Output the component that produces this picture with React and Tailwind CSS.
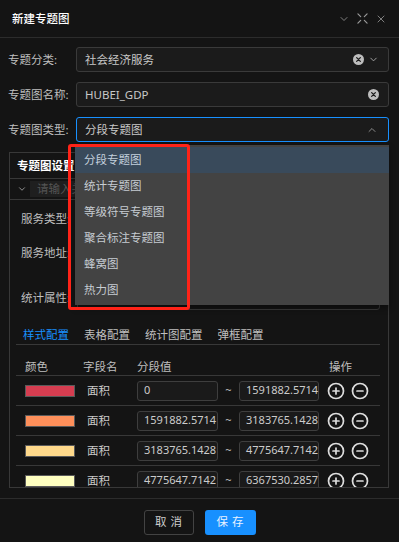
import { ChevronDown, ChevronUp, X, CirclePlus, CircleMinus } from "lucide-react";

const ClearIcon = () => (
  <svg width="11" height="11" viewBox="0 0 12 12">
    <circle cx="6" cy="6" r="6" fill="#bdbdbd" />
    <path d="M4 4l4 4M8 4l-4 4" stroke="#1c1c1c" strokeWidth="1.4" strokeLinecap="round" />
  </svg>
);

const ShrinkIcon = () => (
  <svg width="11" height="11" viewBox="0 0 12 12" stroke="#9a9a9a" strokeWidth="1.3" strokeLinecap="round">
    <path d="M1 1l3 3M11 1l-3 3M1 11l3-3M11 11l-3-3" />
  </svg>
);

const rows = [
  { color: "#d63d50", from: "0", to: "1591882.5714" },
  { color: "#fe8f5a", from: "1591882.5714", to: "3183765.1428" },
  { color: "#ffd98b", from: "3183765.1428", to: "4775647.7142" },
  { color: "#ffffc0", from: "4775647.7142", to: "6367530.2857" },
];

const options = ["分段专题图", "统计专题图", "等级符号专题图", "聚合标注专题图", "蜂窝图", "热力图"];

function FormRow({ label, children, active }) {
  return (
    <div className="flex items-center h-[25px]">
      <div className="w-[76px] shrink-0 pl-[8px] text-[11.5px] text-[#bfbfbf] whitespace-nowrap">{label}</div>
      <div
        className={`flex-1 h-full mr-[10px] rounded-[3px] border flex items-center pl-[8px] pr-[9px] bg-[#1b1b1b] ${
          active ? "border-[#1890ff]" : "border-[#3a3a3a]"
        }`}
      >
        {children}
      </div>
    </div>
  );
}

export default function App() {
  return (
    <div className="relative w-[399px] h-[542px] bg-[#141414] flex flex-col overflow-hidden font-['Noto_Sans','Noto_Sans_CJK_SC',sans-serif]">
      {/* header */}
      <div className="h-[38px] shrink-0 border-b border-[#2c2c2c] flex items-center justify-between pl-[12px] pr-[12px]">
        <span className="text-[11.5px] font-medium text-white">新建专题图</span>
        <div className="flex items-center gap-[7px] text-[#9a9a9a]">
          <ChevronDown size={12} strokeWidth={1.6} />
          <ShrinkIcon />
          <X size={12} strokeWidth={1.6} />
        </div>
      </div>

      {/* form */}
      <div className="pt-[9px] flex flex-col gap-[10px]">
        <FormRow label="专题分类:">
          <span className="flex-1 text-[11.5px] text-[#c8c8c8]">社会经济服务</span>
          <ClearIcon />
          <ChevronDown size={11} className="ml-[4px] text-[#aaaaaa]" />
        </FormRow>
        <FormRow label="专题图名称:">
          <span className="flex-1 text-[11.5px] text-[#c8c8c8]">HUBEI_GDP</span>
          <ClearIcon />
        </FormRow>
        <FormRow label="专题图类型:" active>
          <span className="flex-1 text-[11.5px] text-[#c8c8c8]">分段专题图</span>
          <ChevronUp size={12} className="text-[#8a8a8a] mr-[1px]" />
        </FormRow>
      </div>

      {/* settings panel */}
      <div className="mt-[10px] ml-[9px] mr-[10px] h-[336px] shrink-0 border border-[#383838] overflow-hidden flex flex-col">
        <div className="h-[26px] shrink-0 border-b border-[#383838] flex items-center pl-[7px] text-[11.5px] font-bold text-white">
          专题图设置
        </div>
        <div className="h-[21px] shrink-0 border-b border-[#383838] flex items-center pl-[7px]">
          <ChevronDown size={10} className="text-[#aaaaaa]" />
          <div className="ml-[3px] h-[16px] w-[48px] overflow-hidden whitespace-nowrap bg-[#1f1f1f] text-[11.5px] leading-[16px] text-[#555555] pl-[7px]">
            请输入关键字
          </div>
        </div>

        <div className="pl-[11px] pr-[8px] text-[11.5px] text-[#bfbfbf]">
          <div className="mt-[6px] h-[25px] flex items-center">
            <span className="w-[56px]">服务类型:</span>
            <div className="flex-1 h-full rounded-[3px] border border-[#3a3a3a]" />
          </div>
          <div className="mt-[9px] h-[40px] flex items-start">
            <span className="w-[56px] leading-[25px]">服务地址:</span>
            <div className="flex-1 h-full rounded-[3px] border border-[#3a3a3a]" />
          </div>
          <div className="mt-[6px] h-[24px] flex items-center">
            <span className="w-[56px]">统计属性:</span>
            <div className="flex-1 h-full rounded-[3px] border border-[#3a3a3a]" />
          </div>
        </div>

        <div className="ml-[6px] mr-[8px]">
          {/* tabs */}
          <div className="mt-[17px] h-[18px] border-b border-[#383838] flex items-start pl-[7px] gap-[15px] text-[11.5px] leading-[16px]">
            <span className="text-[#1890ff]">样式配置</span>
            <span className="text-[#bfbfbf]">表格配置</span>
            <span className="text-[#bfbfbf]">统计图配置</span>
            <span className="text-[#bfbfbf]">弹框配置</span>
          </div>

          {/* table header */}
          <div className="h-[31px] border-b border-[#383838] flex items-end text-[11.5px] leading-[16px] text-[#bfbfbf]">
            <span className="w-[67px] pl-[9px]">颜色</span>
            <span className="w-[54px]">字段名</span>
            <span className="flex-1">分段值</span>
            <span className="w-[51px]">操作</span>
          </div>

          {rows.map((r, i) => (
            <div key={i} className="h-[30px] border-b border-[#383838] flex items-center">
              <div className="ml-[9px] w-[50px] h-[12px] border border-[#5a5a5a]" style={{ background: r.color }} />
              <span className="ml-[12px] w-[50px] text-[11.5px] text-[#c8c8c8]">面积</span>
              <div className="w-[81px] h-[20px] rounded-[3px] border border-[#3e3e3e] bg-[#1a1a1a] flex items-center pl-[6px] text-[11px] text-[#cccccc]">
                {r.from}
              </div>
              <span className="w-[21px] text-center text-[11px] text-[#bbbbbb]">~</span>
              <div className="w-[80px] h-[20px] rounded-[3px] border border-[#3e3e3e] bg-[#1a1a1a] flex items-center pl-[6px] text-[11px] text-[#cccccc]">
                {r.to}
              </div>
              <CirclePlus size={18} strokeWidth={2.3} className="ml-[8px] text-[#dddddd]" />
              <CircleMinus size={18} strokeWidth={2.3} className="ml-[6px] text-[#dddddd]" />
            </div>
          ))}
        </div>
      </div>

      {/* footer */}
      <div className="mt-[10px] flex-1 border-t border-[#2c2c2c] flex items-center justify-center gap-[11px] pt-[3px]">
        <button className="w-[50px] h-[25px] rounded-[3px] border border-[#434343] text-[11.5px] text-[#cfcfcf] tracking-[4px] pl-[4px]">
          取消
        </button>
        <button className="w-[51px] h-[25px] rounded-[3px] bg-[#1890ff] text-[11.5px] text-[#e8f2ff] tracking-[4px] pl-[4px]">
          保存
        </button>
      </div>

      {/* dropdown */}
      <div className="absolute left-[75px] top-[145px] w-[314px] h-[160px] bg-[#434343] pt-[2px] shadow-[0_3px_6px_rgba(0,0,0,0.4)]">
        {options.map((o, i) => (
          <div
            key={o}
            className={`h-[26px] flex items-center pl-[9px] text-[11.5px] ${
              i === 0 ? "bg-[#394a5b] text-[#c3d0dd]" : "text-[#c6ccd2]"
            }`}
          >
            {o}
          </div>
        ))}
      </div>

      {/* annotation box */}
      <div className="absolute left-[68px] top-[144px] w-[122px] h-[166px] border-[3px] border-[#ff2318] rounded-[3px]" />
    </div>
  );
}
